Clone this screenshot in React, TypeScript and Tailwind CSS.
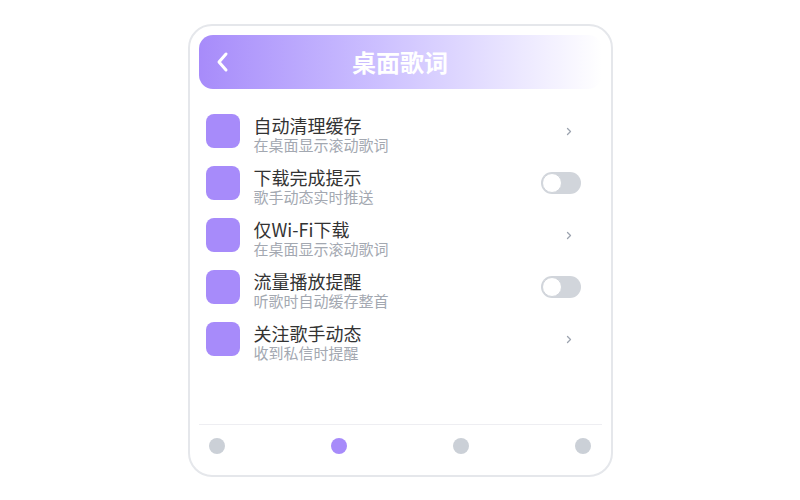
import React from "react";

const rows = [
  { title: "自动清理缓存", sub: "在桌面显示滚动歌词", type: "chevron" },
  { title: "下载完成提示", sub: "歌手动态实时推送", type: "toggle" },
  { title: "仅Wi-Fi下载", sub: "在桌面显示滚动歌词", type: "chevron" },
  { title: "流量播放提醒", sub: "听歌时自动缓存整首", type: "toggle" },
  { title: "关注歌手动态", sub: "收到私信时提醒", type: "chevron" },
];

export default function App() {
  return (
    <div
      className="w-[800px] h-[500px] bg-white flex justify-center pt-[24px]"
      style={{ fontFamily: '"Noto Sans CJK SC", "Noto Sans", sans-serif' }}
    >
      <div className="w-[425px] h-[453px] border-2 border-[#e5e7eb] rounded-[24px] p-[9px] flex flex-col">
        <div className="h-[54px] rounded-[14px] bg-gradient-to-r from-[#a78bfa] to-white flex items-center relative">
          <svg className="absolute left-[16px]" width="16" height="22" viewBox="0 0 16 22" fill="none">
            <path d="M11 3 L4 11 L11 19" stroke="white" strokeWidth="3" strokeLinecap="round" strokeLinejoin="round" />
          </svg>
          <div className="flex-1 text-center text-white text-[24px] font-bold leading-none">桌面歌词</div>
        </div>
        <div className="flex flex-col mt-[16px] flex-1">
          {rows.map((r, i) => (
            <div key={i} className="h-[52px] flex items-center pl-[7px] pr-[21px]">
              <div className="w-[34px] h-[34px] rounded-[8px] bg-[#a78bfa] shrink-0" />
              <div className="ml-[14px] flex-1 flex flex-col pt-[6px]">
                <div className="text-[18px] leading-[22px] text-[#333]">{r.title}</div>
                <div className="text-[15px] leading-[18px] text-[#a3a8b1]">{r.sub}</div>
              </div>
              {r.type === "chevron" ? (
                <div className="w-[40px] flex justify-end pr-[9px]">
                  <svg width="6" height="9" viewBox="0 0 6 9" fill="none">
                    <path d="M1.5 1.5 L4.5 4.5 L1.5 7.5" stroke="#9ca3af" strokeWidth="1.3" strokeLinecap="round" strokeLinejoin="round" />
                  </svg>
                </div>
              ) : (
                <div className="w-[40px] h-[22px] rounded-full bg-[#d1d5db] relative">
                  <div className="absolute left-[1px] top-[1px] w-[20px] h-[20px] rounded-full bg-white border border-[#d1d5db]" />
                </div>
              )}
            </div>
          ))}
        </div>
        <div className="border-t border-[#eeeef2] h-[42px] flex items-center justify-between px-[10px]">
          <div className="w-[16px] h-[16px] rounded-full bg-[#cbd0d7]" />
          <div className="w-[16px] h-[16px] rounded-full bg-[#a78bfa]" />
          <div className="w-[16px] h-[16px] rounded-full bg-[#cbd0d7]" />
          <div className="w-[16px] h-[16px] rounded-full bg-[#cbd0d7]" />
        </div>
      </div>
    </div>
  );
}
